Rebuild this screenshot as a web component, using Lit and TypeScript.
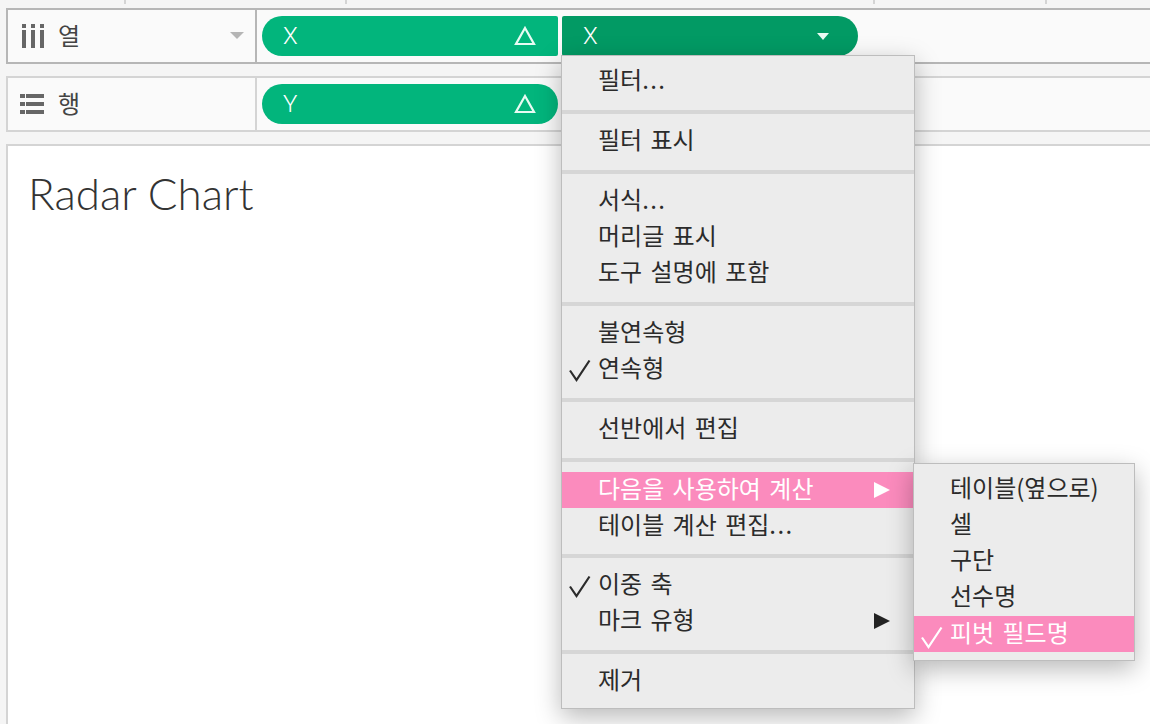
import {html, css, LitElement, svg} from 'lit';
import {customElement} from 'lit/decorators.js';

type Item = {label: string; check?: boolean; arrow?: boolean; active?: boolean};

const MAIN_MENU: Item[][] = [
  [{label: '필터...'}],
  [{label: '필터 표시'}],
  [{label: '서식...'}, {label: '머리글 표시'}, {label: '도구 설명에 포함'}],
  [{label: '불연속형'}, {label: '연속형', check: true}],
  [{label: '선반에서 편집'}],
  [{label: '다음을 사용하여 계산', arrow: true, active: true}, {label: '테이블 계산 편집...'}],
  [{label: '이중 축', check: true}, {label: '마크 유형', arrow: true}],
  [{label: '제거'}],
];

const SUB_MENU: Item[] = [
  {label: '테이블(옆으로)'},
  {label: '셀'},
  {label: '구단'},
  {label: '선수명'},
  {label: '피벗 필드명', check: true, active: true},
];

const checkIcon = html`<svg class="check" viewBox="0 0 24 24" width="24" height="24">
  <path d="M2 12.5 L8.5 22 L21.5 2.5" fill="none" stroke="currentColor" stroke-width="2.2"/>
</svg>`;

const arrowIcon = html`<svg class="arrow" viewBox="0 0 16 16" width="16" height="16">
  <path d="M0 0 L16 8 L0 16 Z" fill="currentColor"/>
</svg>`;

const deltaIcon = html`<svg class="delta" viewBox="0 0 22 20" width="22" height="20">
  <path d="M11 2 L20 18 L2 18 Z" fill="none" stroke="#e8fbf3" stroke-width="2.2"/>
</svg>`;

const columnsIcon = svg`<path d="M0 0h4v4H0zM9 0h4v4H9zM18 0h4v4h-4zM0 6h4v18H0zM9 6h4v18H9zM18 6h4v18h-4z" fill="#666"/>`;
const rowsIcon = svg`<path d="M0 0h5v4H0zM6 0h18v4H6zM0 8h5v4H0zM6 8h18v4H6zM0 16h5v4H0zM6 16h18v4H6z" fill="#666"/>`;

@customElement('app-root')
export class AppRoot extends LitElement {
  static styles = css`
    :host {
      display: block;
      position: relative;
      width: 1150px;
      height: 724px;
      overflow: hidden;
      background: #f5f5f5;
      font-family: "Noto Sans CJK KR", "Liberation Sans", sans-serif;
      color: #333;
    }
    .ruler {
      display: flex;
      height: 8px;
      padding-left: 124px;
    }
    .tick {
      width: 2px;
      height: 4px;
      background: #d4d4d4;
    }
    .gap-a { margin-left: 219px; }
    .gap-b { margin-left: 526px; }
    .gap-c { margin-left: 170px; }
    .shelf {
      display: flex;
      height: 56px;
      margin: 0 0 12px 6px;
      width: 1160px;
      box-sizing: border-box;
      border: 2px solid #d4d4d4;
      background: #fafafa;
    }
    .shelf.focused {
      border-color: #b6b6b6;
    }
    .shelf-label {
      display: flex;
      align-items: center;
      width: 249px;
      box-sizing: border-box;
      border-right: 2px solid #d4d4d4;
      padding: 0 0 3px 14px;
      font-size: 24px;
      color: #444;
    }
    .shelf-label.rows {
      padding-left: 12px;
    }
    .focused .shelf-label {
      border-right-color: #b6b6b6;
    }
    .shelf-label svg {
      flex: none;
      margin: 3px 14px 0 0;
    }
    .shelf-label span {
      flex: 1;
    }
    .caret {
      width: 0;
      height: 0;
      border-left: 7px solid transparent;
      border-right: 7px solid transparent;
      border-top: 7px solid #b5b5b5;
      margin: 1px 11px 0 0;
    }
    .pills {
      display: flex;
      gap: 4px;
      padding: 6px 0 0 5px;
    }
    .pill {
      display: flex;
      align-items: center;
      justify-content: space-between;
      box-sizing: border-box;
      width: 296px;
      height: 40px;
      padding: 0 22px 0 21px;
      background: #02b57c;
      color: #fff;
      font-family: "Roboto", "Liberation Sans", sans-serif;
      font-weight: 300;
      font-size: 24px;
    }
    .pill.left { border-radius: 20px 2px 2px 20px; }
    .pill.right { border-radius: 2px 20px 20px 2px; background: #029a64; }
    .pill.both { border-radius: 20px; }
    .pill-caret {
      width: 0;
      height: 0;
      border-left: 6px solid transparent;
      border-right: 6px solid transparent;
      border-top: 7px solid #e8fbf3;
      margin-right: 7px;
    }
    .sheet {
      margin-left: 6px;
      height: 600px;
      border: 2px solid #d4d4d4;
      background: #fff;
      padding: 20px 20px;
      box-sizing: border-box;
      width: 1160px;
    }
    .title {
      font-family: "Lato", "Open Sans", sans-serif;
      font-weight: 300;
      font-size: 44px;
      line-height: 54px;
      color: #333;
    }
    .menu {
      position: absolute;
      box-sizing: border-box;
      background: #ececec;
      border: 1px solid #bdbdbd;
      box-shadow: 0 8px 24px rgba(0, 0, 0, 0.28);
      color: #2b2b2b;
      font-size: 24px;
      word-spacing: 3px;
    }
    .main {
      left: 561px;
      top: 55px;
      width: 354px;
      height: 654px;
    }
    .sub {
      left: 913px;
      top: 463px;
      width: 222px;
      height: 198px;
      padding-top: 5px;
    }
    .section {
      padding: 9px 0 11px;
      border-bottom: 4px solid #d6d6d6;
    }
    .section:nth-child(1) {
      padding: 7px 0 11px;
    }
    .section:nth-child(6) {
      padding: 10px 0;
    }
    .section:last-child {
      border-bottom: 0;
    }
    .item {
      position: relative;
      display: flex;
      align-items: center;
      box-sizing: border-box;
      height: 36px;
      line-height: 36px;
      padding-left: 36px;
      white-space: nowrap;
    }
    .main .item {
      padding-bottom: 4px;
    }
    .item.active {
      background: #fb8bbd;
      color: #fff;
    }
    .sub .item.active {
      margin-top: 3px;
      padding-bottom: 4px;
    }
    .dots {
      letter-spacing: 1.4px;
    }
    .check {
      position: absolute;
      left: 6px;
      top: 7px;
    }
    .sub .check {
      top: 9px;
    }
    .arrow {
      position: absolute;
      right: 24px;
      top: 10px;
      color: #222;
    }
    .active .arrow {
      color: #fff;
    }
  `;

  renderLabel(label: string) {
    if (!label.endsWith('...')) return label;
    return html`<span>${label.slice(0, -3)}<span class="dots">...</span></span>`;
  }

  renderItem(item: Item) {
    return html`<div class="item ${item.active ? 'active' : ''}">
      ${item.check ? checkIcon : ''}
      ${this.renderLabel(item.label)}
      ${item.arrow ? arrowIcon : ''}
    </div>`;
  }

  render() {
    return html`
      <div class="ruler">
        <div class="tick"></div>
        <div class="tick gap-a"></div>
        <div class="tick gap-b"></div>
        <div class="tick gap-c"></div>
      </div>
      <div class="shelf focused">
        <div class="shelf-label">
          <svg width="22" height="24" viewBox="0 0 22 24">${columnsIcon}</svg>
          <span>열</span>
          <div class="caret"></div>
        </div>
        <div class="pills">
          <div class="pill left">X ${deltaIcon}</div>
          <div class="pill right">X <div class="pill-caret"></div></div>
        </div>
      </div>
      <div class="shelf">
        <div class="shelf-label rows">
          <svg width="24" height="20" viewBox="0 0 24 20">${rowsIcon}</svg>
          <span>행</span>
        </div>
        <div class="pills">
          <div class="pill both">Y ${deltaIcon}</div>
        </div>
      </div>
      <div class="sheet">
        <div class="title">Radar Chart</div>
      </div>
      <div class="menu main">
        ${MAIN_MENU.map((section) => html`<div class="section">
          ${section.map((item) => this.renderItem(item))}
        </div>`)}
      </div>
      <div class="menu sub">
        ${SUB_MENU.map((item) => this.renderItem(item))}
      </div>
    `;
  }
}
